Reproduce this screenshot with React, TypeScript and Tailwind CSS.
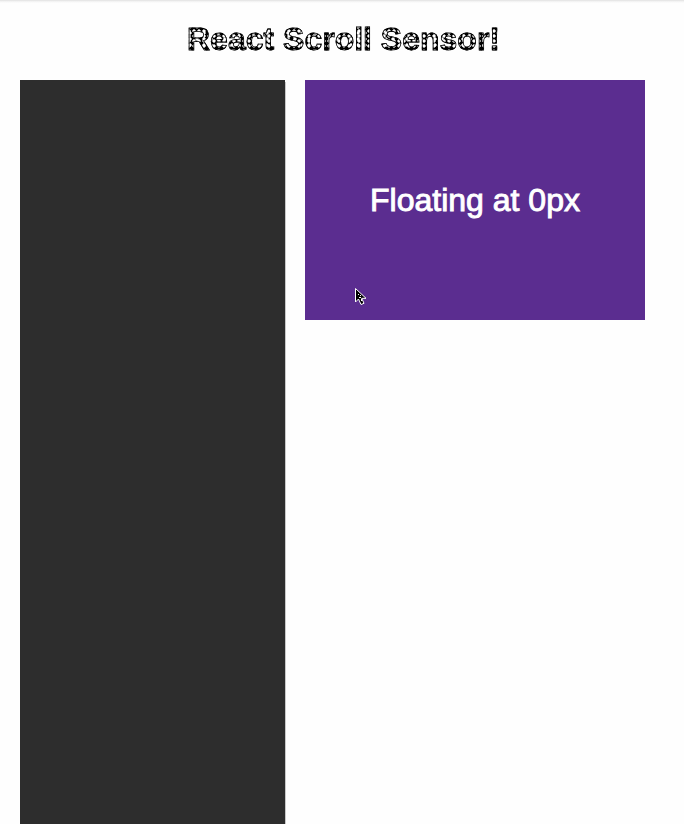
export default function App() {
  return (
    <main className="h-[824px] overflow-hidden bg-[#fefefe] bg-[linear-gradient(#dedede_0px,#f0f0f0_1px,#fefefe_3px)] font-['Liberation_Sans',Arial,sans-serif]">
      <h1 className="flex h-20 justify-center pt-[19px] pl-[2px] text-[32px] leading-[40px] font-bold whitespace-nowrap">
        <span className="bg-black bg-[radial-gradient(circle_at_2px_2px,white_1.5px,transparent_1.7px),radial-gradient(circle_at_3px_2px,white_1.5px,transparent_1.7px)] bg-[length:5px_5px,7px_6px] bg-clip-text text-transparent antialiased will-change-transform [-webkit-text-stroke:0.8px_black]">
          React Scroll Sensor!
        </span>
      </h1>
      <div className="flex items-start pl-5">
        <section className="h-[744px] w-[265px] shrink-0 bg-[#2d2d2d]" />
        <div className="mt-[2px] h-[742px] w-px shrink-0 bg-[#c8c8c8]" />
        <section className="relative ml-[19px] flex h-[240px] w-[340px] items-center justify-center bg-[#5b2d90] text-[32px] text-white">
          <span className="whitespace-nowrap [-webkit-text-stroke:0.9px_white]">Floating at 0px</span>
          <svg className="absolute top-[207px] left-[49px]" width="14" height="20" viewBox="0 0 14 20">
            <path d="M1.5 1.5v13.5l3-3 2.5 5.5 3-1.2-2.3-5H12z" fill="black" stroke="white" />
            <path d="M4 7h1v1H4zM6 8h1v1H6zM5 10h2v1H5zM7 12h1v2H7z" fill="white" />
          </svg>
        </section>
      </div>
    </main>
  );
}
